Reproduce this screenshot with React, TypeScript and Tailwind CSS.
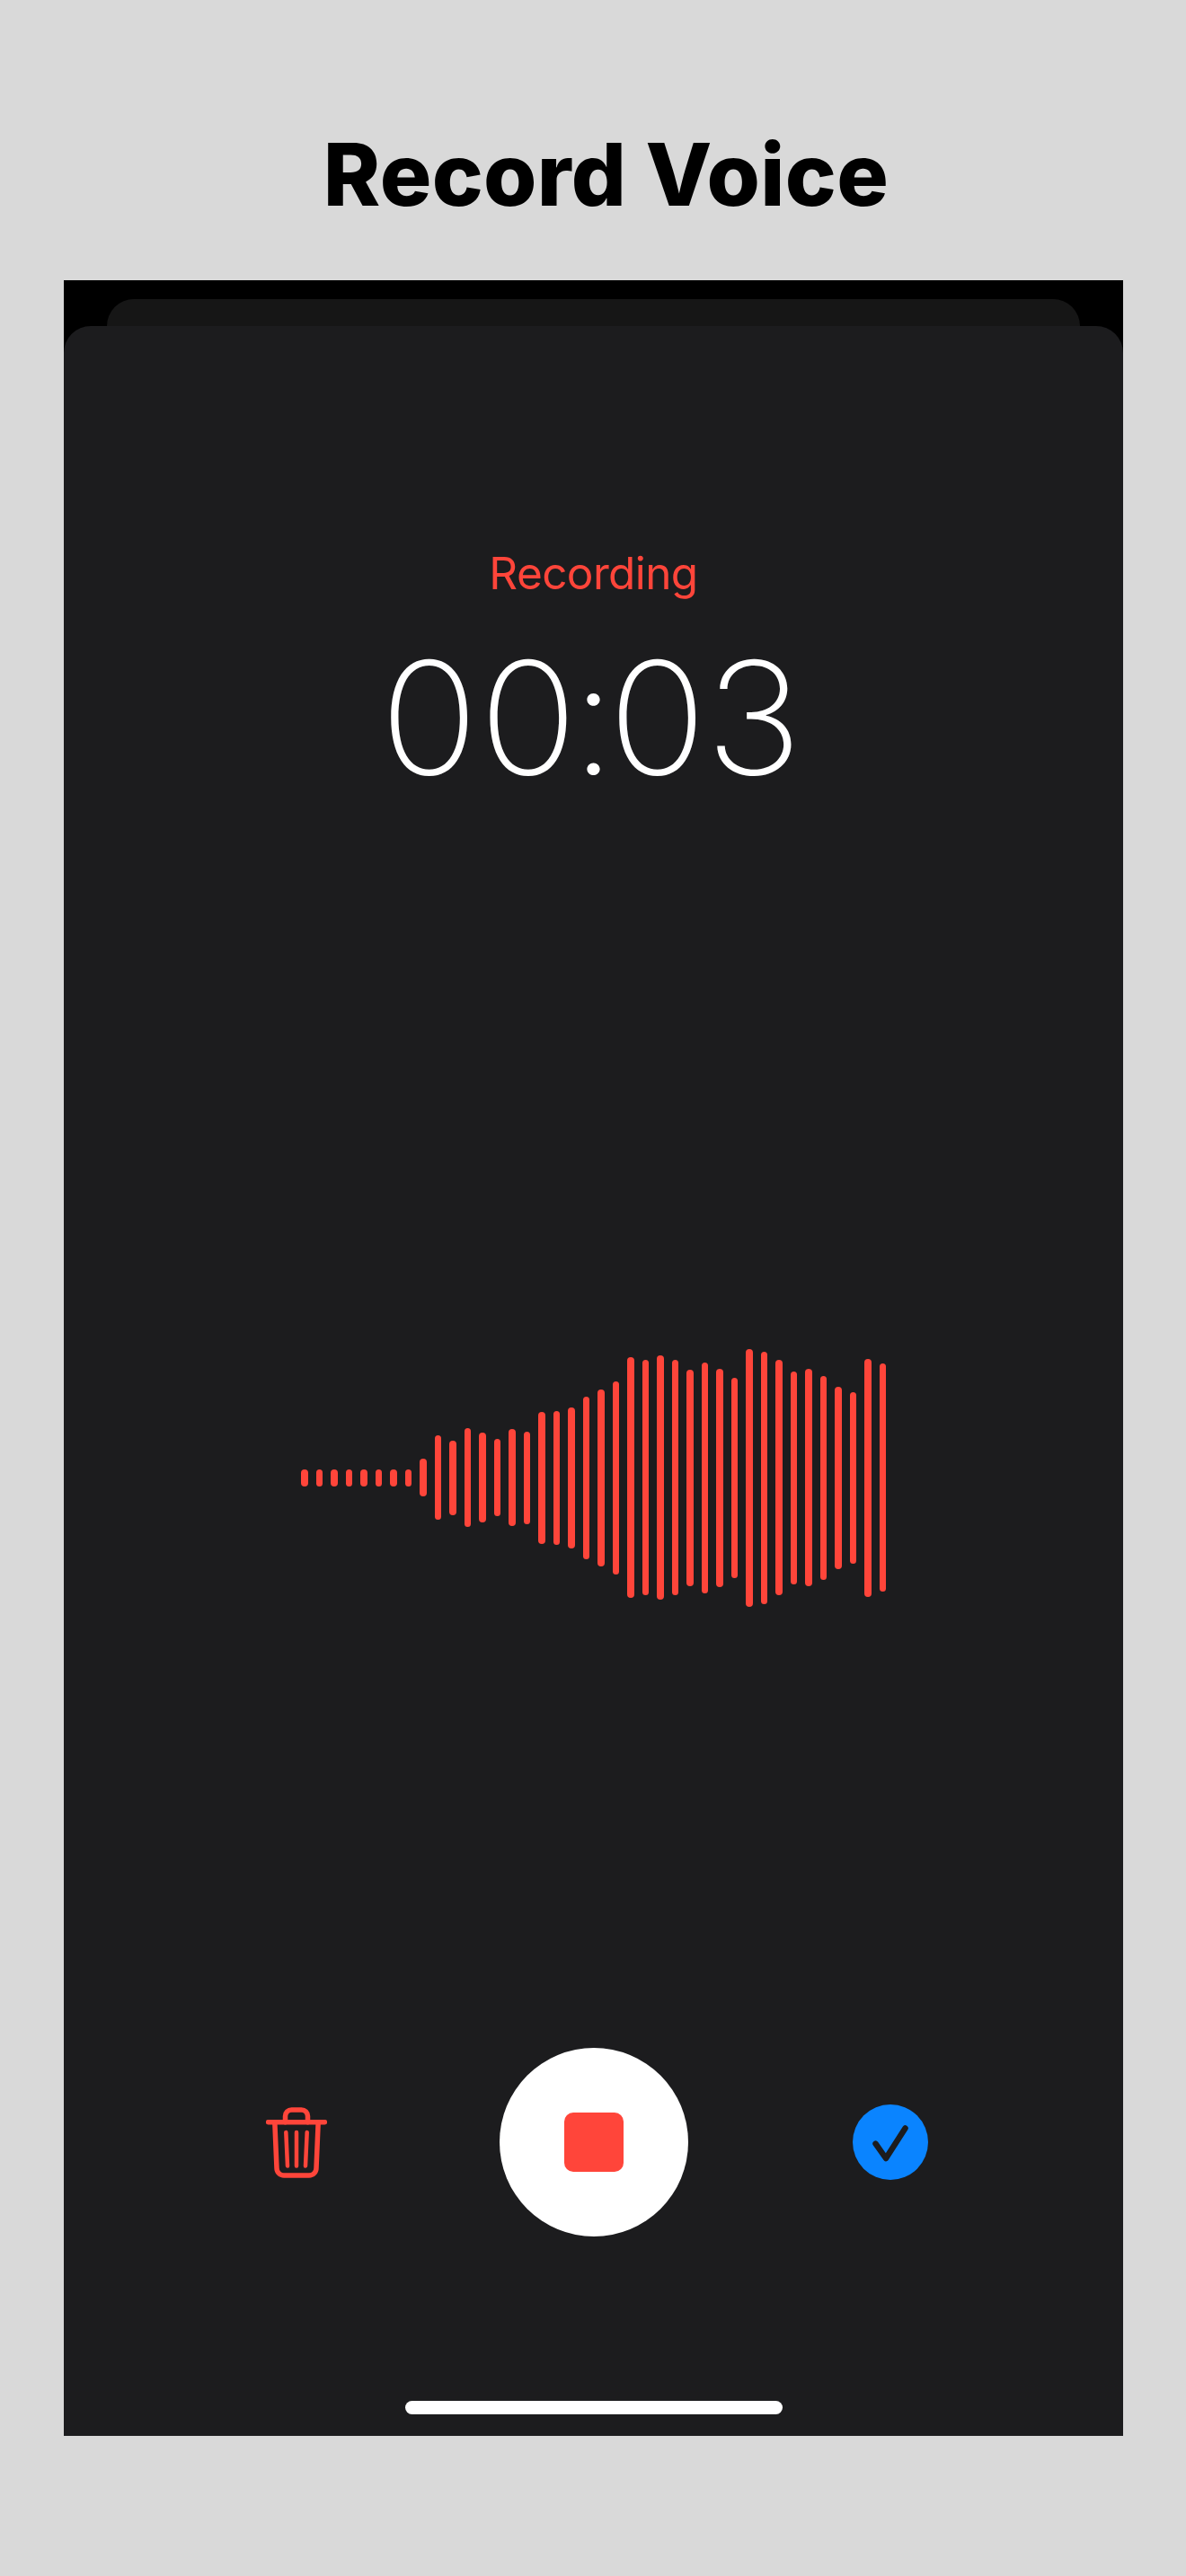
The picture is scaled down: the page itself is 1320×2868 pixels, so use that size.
const HEIGHTS = [19,19,19,19,19,19,19,19,42,94,83,110,100,86,108,103,147,149,157,181,197,215,268,262,272,262,241,257,243,223,287,281,262,237,242,227,203,191,265,254];

function TrashIcon() {
  return (
    <svg width="68" height="79" viewBox="0 0 68 79" fill="none" stroke="#FF453A" strokeLinecap="round" strokeLinejoin="round">
      <path d="M2.5 16.7H65.5" strokeWidth="5.5" />
      <path d="M21.5 16.7V10a7 7 0 0 1 7-7h11a7 7 0 0 1 7 7v6.7" strokeWidth="5.5" />
      <path d="M9.8 16.7L12 68a8 8 0 0 0 8 8H48a8 8 0 0 0 8-8L58.2 16.7" strokeWidth="5.5" />
      <path d="M22.3 28L24 65.5M34 28V65.5M45.7 28L44 65.5" strokeWidth="4.5" />
    </svg>
  );
}

function CheckIcon() {
  return (
    <svg width="44" height="44" viewBox="20 20 44 44" fill="none" stroke="#1c1c1e" strokeWidth="6.5" strokeLinecap="round" strokeLinejoin="round">
      <path d="M25.5 43.7L37 60L58.5 26.5" />
    </svg>
  );
}

export default function App() {
  return (
    <div className="flex h-[2868px] w-[1320px] flex-col bg-[#d9d9d9] font-['Inter',sans-serif]">
      <h1 className="h-[312px] pt-[136px] pl-[29px] text-center text-[96px] leading-[116px] font-extrabold tracking-[0.3px] text-black">Record Voice</h1>
      <div className="ml-[71px] flex h-[2400px] w-[1179px] flex-col overflow-hidden bg-black pt-[21px]">
        <div className="mx-[48px] h-[60px] shrink-0 rounded-t-[30px] bg-[#161616]" />
        <div className="-mt-[30px] flex flex-1 flex-col rounded-t-[30px] bg-[#1c1c1e]">
          <p className="mt-[245px] text-center text-[49.5px] leading-[60px] font-normal tracking-[-0.6px] text-[#FF453A]">Recording</p>
          <p className="mt-[26px] scale-x-[1.04] pr-[5px] text-center text-[174px] leading-[210px] font-extralight text-white">
            <span className="tracking-[1px]">0</span>
            <span className="tracking-[-7px]">0</span>
            <span className="tracking-[-8px]">:</span>
            <span className="tracking-[-1px]">0</span>3
          </p>
          <div className="mt-[591px] flex h-[300px] items-center justify-center gap-[9px]">
            {HEIGHTS.map((h, i) => (
              <div key={i} className="w-[7.5px] rounded-full bg-[#FF453A]" style={{ height: h }} />
            ))}
          </div>
          <div className="mt-[485px] flex items-center pl-[225px]">
            <TrashIcon />
            <div className="ml-[192px] flex h-[210px] w-[210px] items-center justify-center rounded-full bg-white">
              <div className="h-[66px] w-[66px] rounded-[10px] bg-[#FF453A]" />
            </div>
            <div className="ml-[183px] flex h-[84px] w-[84px] items-center justify-center rounded-full bg-[#0A84FF]">
              <CheckIcon />
            </div>
          </div>
          <div className="mt-[183px] ml-[380px] h-[15px] w-[420px] rounded-full bg-white" />
        </div>
      </div>
    </div>
  );
}
